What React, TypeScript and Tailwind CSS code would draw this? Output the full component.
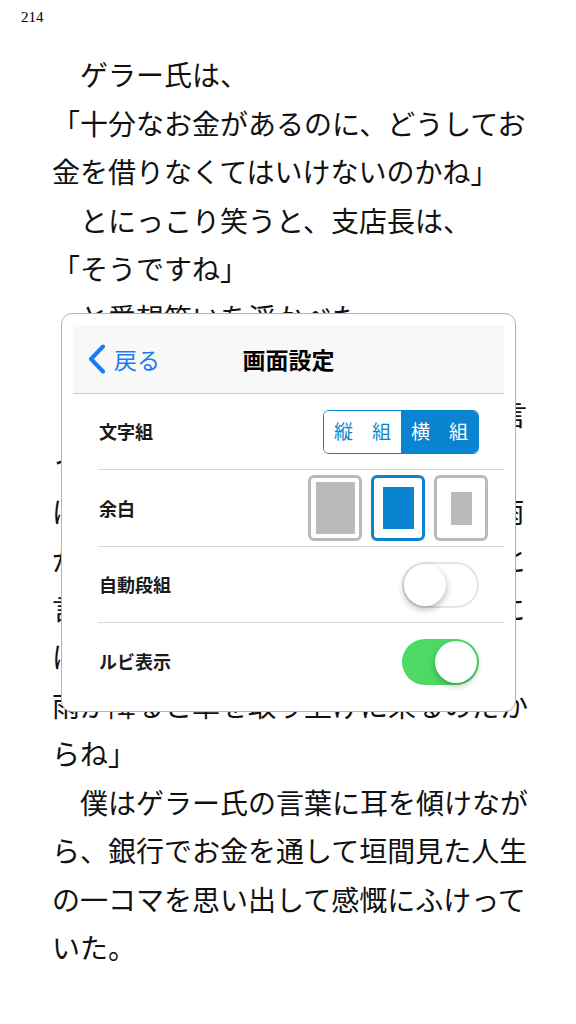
import React from "react";

const bodyLines = [
  "　ゲラー氏は、",
  "「十分なお金があるのに、どうしてお",
  "金を借りなくてはいけないのかね」",
  "　とにっこり笑うと、支店長は、",
  "「そうですね」",
  "　と愛想笑いを浮かべた。",
  "「私どもも商売ですから」",
  "　ゲラー氏は小さく頷くと、静かに言",
  "った。「銀行というのは、晴れた日に",
  "は喜んで傘を貸してくれるが、いざ雨",
  "が降りそうになると、その傘を返せと",
  "言ってくる。本当に傘が必要なときに",
  "は貸してくれない。それどころか、",
  "雨が降ると傘を取り上げに来るのだか",
  "らね」",
  "　僕はゲラー氏の言葉に耳を傾けなが",
  "ら、銀行でお金を通して垣間見た人生",
  "の一コマを思い出して感慨にふけって",
  "いた。",
];

function BackChevron() {
  return (
    <svg width="20" height="30" viewBox="0 0 20 30" fill="none">
      <polyline
        points="16,2.5 4,15 16,27.5"
        stroke="#1a7cf5"
        strokeWidth="4"
        strokeLinecap="round"
        strokeLinejoin="round"
      />
    </svg>
  );
}

function MarginOption({
  selected,
  innerClass,
}: {
  selected?: boolean;
  innerClass: string;
}) {
  return (
    <div
      className={
        selected
          ? "flex h-[66px] w-[54px] items-center justify-center rounded-[6px] border-[3px] border-[#0a84d0]"
          : "flex h-[66px] w-[54px] items-center justify-center rounded-[6px] border-[3px] border-[#bababa]"
      }
    >
      <div className={innerClass} />
    </div>
  );
}

function Toggle({ on }: { on?: boolean }) {
  return on ? (
    <div className="flex h-[46px] w-[77px] items-center justify-end rounded-full bg-[#4cd964] p-[2px]">
      <div className="h-[42px] w-[42px] rounded-full bg-white shadow-[0_3px_6px_rgba(0,0,0,0.25)]" />
    </div>
  ) : (
    <div className="flex h-[46px] w-[77px] items-center justify-start rounded-full border-[2px] border-[#e4e4e4] bg-white">
      <div className="h-[42px] w-[42px] rounded-full bg-white shadow-[0_3px_7px_rgba(0,0,0,0.3)]" />
    </div>
  );
}

function Row({
  label,
  last,
  h,
  children,
}: {
  label: string;
  last?: boolean;
  h: string;
  children: React.ReactNode;
}) {
  return (
    <div
      className={
        (last ? "" : "border-b border-[#d9d9d9] ") +
        h +
        " flex items-center justify-between pl-[1px] pr-[25px]"
      }
    >
      <span className="text-[18px] font-semibold text-[#1a1a1a]">{label}</span>
      {children}
    </div>
  );
}

export default function App() {
  return (
    <div className="relative h-[1024px] w-[576px] overflow-hidden bg-white text-black">
      <div className="pl-[21px] pt-[8px] text-[15px] leading-[18px] [font-family:'Liberation_Serif',serif]">
        214
      </div>

      <div className="mt-[27px] pl-[52px] text-[28px] leading-[48.5px] text-[#111] [font-family:'Liberation_Serif','Noto_Sans_CJK_JP',serif]">
        {bodyLines.map((line, i) => (
          <div key={i} className="whitespace-nowrap">
            {line}
          </div>
        ))}
      </div>

      {/* Display settings popover */}
      <div className="absolute left-[61px] top-[313px] w-[455px] rounded-[11px] border border-[#b4b4b4] bg-white p-[11px] [font-family:'Noto_Sans_CJK_JP',sans-serif]">
        <div className="grid h-[69px] grid-cols-[1fr_auto_1fr] items-center border-b border-[#c6c6c6] bg-[#f8f8f8]">
          <div className="flex items-center gap-[7px] pl-[14px]">
            <BackChevron />
            <span className="text-[23px] leading-none text-[#1a7cf5]">戻る</span>
          </div>
          <div className="text-[23px] font-bold leading-none text-black">画面設定</div>
          <div />
        </div>

        <div className="ml-[25px]">
          <Row label="文字組" h="h-[76px]">
            <div className="flex h-[44px] w-[156px] overflow-hidden rounded-[6px] border-[1.5px] border-[#0a84d0]">
              <div className="flex flex-1 items-center justify-center bg-white text-[19px] text-[#0a84d0]">
                縦　組
              </div>
              <div className="flex flex-1 items-center justify-center bg-[#0a84d0] text-[19px] text-white">
                横　組
              </div>
            </div>
          </Row>
          <Row label="余白" h="h-[77px]">
            <div className="-mr-[9px] flex gap-[9px]">
              <MarginOption innerClass="h-[52px] w-[39px] bg-[#bababa]" />
              <MarginOption selected innerClass="h-[42px] w-[31px] bg-[#0a84d0]" />
              <MarginOption innerClass="h-[33px] w-[21px] bg-[#bababa]" />
            </div>
          </Row>
          <Row label="自動段組" h="h-[76px]">
            <Toggle />
          </Row>
          <Row label="ルビ表示" h="h-[77px]" last>
            <Toggle on />
          </Row>
        </div>
      </div>
    </div>
  );
}
